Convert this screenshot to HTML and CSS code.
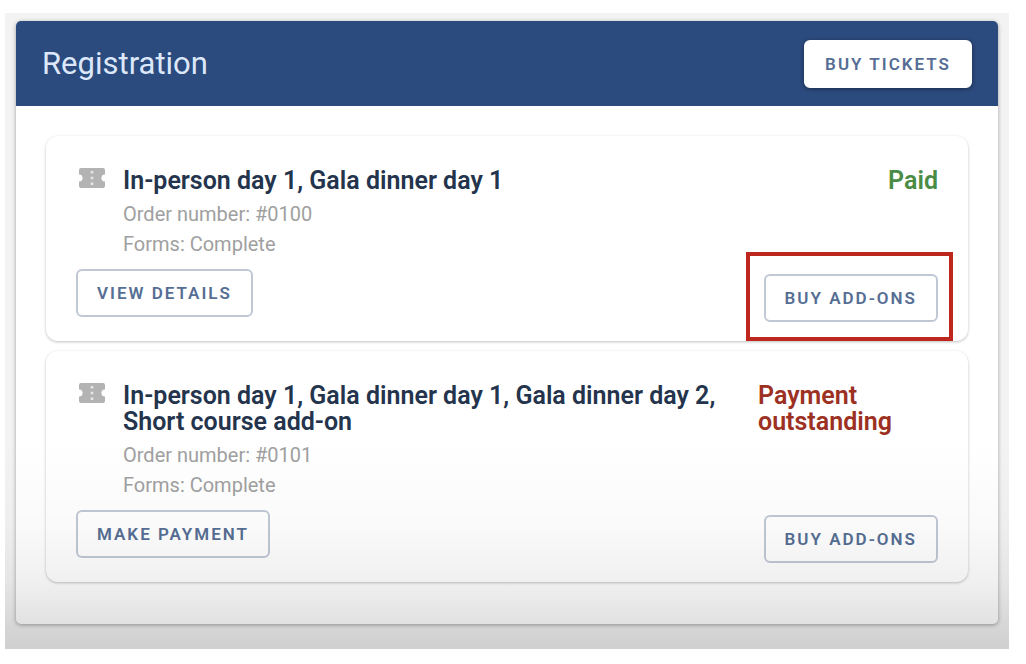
FILE: index.html
```html
<!DOCTYPE html>
<html lang="en">
<head>
    <meta charset="UTF-8">
    <meta name="viewport" content="width=device-width, initial-scale=1.0">
    <title>Registration</title>
    <link rel="stylesheet" href="styles.css">
</head>
<body>
    <main class="page">
        <section class="panel">
            <header class="panel-header">
                <h1>Registration</h1>
                <button type="button" class="btn btn-solid">BUY TICKETS</button>
            </header>
            <div class="orders">
                <article class="card">
                    <div class="card-main">
                        <div class="order">
                            <svg class="ticket" viewBox="0 0 26 20" aria-hidden="true">
                                <path fill="#b3b3b3" d="M2 0h22a2 2 0 0 1 2 2v4.500c-2.600 0-3.600 1.600-3.600 3.500s1 3.500 3.600 3.500V18a2 2 0 0 1-2 2H2a2 2 0 0 1-2-2v-4.500c2.600 0 3.600-1.600 3.600-3.500S2.600 6.500 0 6.500V2a2 2 0 0 1 2-2z"/>
                                <path fill="#e8e8e8" d="M11.700 3h2.600v2.600h-2.600zM11.700 8.700h2.600v2.600h-2.600zM11.700 14.400h2.600V17h-2.600z"/>
                            </svg>
                            <div class="order-text">
                                <h2>In-person day 1, Gala dinner day 1</h2>
                                <p>Order number: #0100</p>
                                <p>Forms: Complete</p>
                            </div>
                        </div>
                        <button type="button" class="btn">VIEW DETAILS</button>
                    </div>
                    <div class="card-side">
                        <strong class="status paid">Paid</strong>
                        <div class="highlight">
                            <button type="button" class="btn">BUY ADD-ONS</button>
                        </div>
                    </div>
                </article>
                <article class="card">
                    <div class="card-main">
                        <div class="order">
                            <svg class="ticket" viewBox="0 0 26 20" aria-hidden="true">
                                <path fill="#b3b3b3" d="M2 0h22a2 2 0 0 1 2 2v4.500c-2.600 0-3.600 1.600-3.600 3.500s1 3.500 3.600 3.500V18a2 2 0 0 1-2 2H2a2 2 0 0 1-2-2v-4.500c2.600 0 3.600-1.600 3.600-3.500S2.600 6.500 0 6.500V2a2 2 0 0 1 2-2z"/>
                                <path fill="#e8e8e8" d="M11.700 3h2.600v2.600h-2.600zM11.700 8.700h2.600v2.600h-2.600zM11.700 14.400h2.600V17h-2.600z"/>
                            </svg>
                            <div class="order-text">
                                <h2>In-person day 1, Gala dinner day 1, Gala dinner day 2, Short course add-on</h2>
                                <p>Order number: #0101</p>
                                <p>Forms: Complete</p>
                            </div>
                        </div>
                        <button type="button" class="btn">MAKE PAYMENT</button>
                    </div>
                    <div class="card-side">
                        <strong class="status outstanding">Payment outstanding</strong>
                        <button type="button" class="btn">BUY ADD-ONS</button>
                    </div>
                </article>
            </div>
        </section>
    </main>
</body>
</html>
```
FILE: styles.css
```css
* {
    box-sizing: border-box;
}

body {
    margin: 13px 17px 15px 5px;
    background-color: #fff;
    font-family: Roboto, sans-serif;
}

h1, h2, p {
    margin: 0;
}

.page {
    position: relative;
    padding: 8px 11px 25px;
    background-color: #f3f3f3;
}

/* shade that fades in over the bottom of the page */
.page::after {
    content: "";
    position: absolute;
    left: 0;
    right: 0;
    bottom: 0;
    height: 210px;
    background: linear-gradient(rgba(0, 0, 0, 0), rgba(0, 0, 0, 0.02) 40%, rgba(0, 0, 0, 0.06) 68%, rgba(0, 0, 0, 0.15));
    pointer-events: none;
}

.panel {
    border-radius: 5px;
    background-color: #fff;
    box-shadow: 0 1px 4px rgba(0, 0, 0, 0.35);
}

.panel-header {
    display: flex;
    justify-content: space-between;
    align-items: center;
    height: 85px;
    padding: 0 26px;
    border-radius: 5px 5px 0 0;
    background-color: #2b4a7d;
}

.panel-header h1 {
    color: #dce8fa;
    font-size: 31px;
    font-weight: 400;
}

.orders {
    display: flex;
    flex-direction: column;
    gap: 10px;
    padding: 30px 30px 42px;
}

.card {
    display: flex;
    justify-content: space-between;
    gap: 20px;
    padding: 32px 30px 19px;
    border-radius: 12px;
    background-color: #fff;
    box-shadow: 0 1px 3px rgba(0, 0, 0, 0.25);
}

.card-main {
    display: flex;
    flex: 1;
    flex-direction: column;
    align-items: flex-start;
    gap: 10px;
    padding-bottom: 5px;
}

.order {
    display: flex;
    gap: 18px;
    padding-left: 3px;
}

.ticket {
    flex: none;
    width: 26px;
    height: 20px;
}

.order-text h2 {
    margin-bottom: 5px;
    color: #24344d;
    font-size: 25px;
    font-weight: 600;
    line-height: 26px;
}

.order-text p {
    color: #a0a0a0;
    font-size: 20px;
    line-height: 30px;
}

.card-side {
    display: flex;
    flex: none;
    flex-direction: column;
    justify-content: space-between;
    align-items: flex-end;
    width: 180px;
}

.status {
    font-size: 25px;
    font-weight: 600;
    line-height: 26px;
}

.paid {
    color: #4a8c46;
}

.outstanding {
    color: #9c3022;
}

.btn {
    height: 48px;
    padding: 0 19px;
    border: 2px solid #c0c8d6;
    border-radius: 6px;
    background-color: transparent;
    color: #566e94;
    font-family: inherit;
    font-size: 17px;
    font-weight: 600;
    letter-spacing: 2px;
    white-space: nowrap;
    cursor: pointer;
}

.btn-solid {
    border-color: #fff;
    background-color: #fff;
    box-shadow: 0 1px 4px rgba(0, 0, 0, 0.4);
}

.highlight {
    position: relative;
}

.highlight::before {
    content: "";
    position: absolute;
    top: -22px;
    right: -15px;
    bottom: -19px;
    left: -18px;
    border: 4px solid #be271d;
    pointer-events: none;
}
```
